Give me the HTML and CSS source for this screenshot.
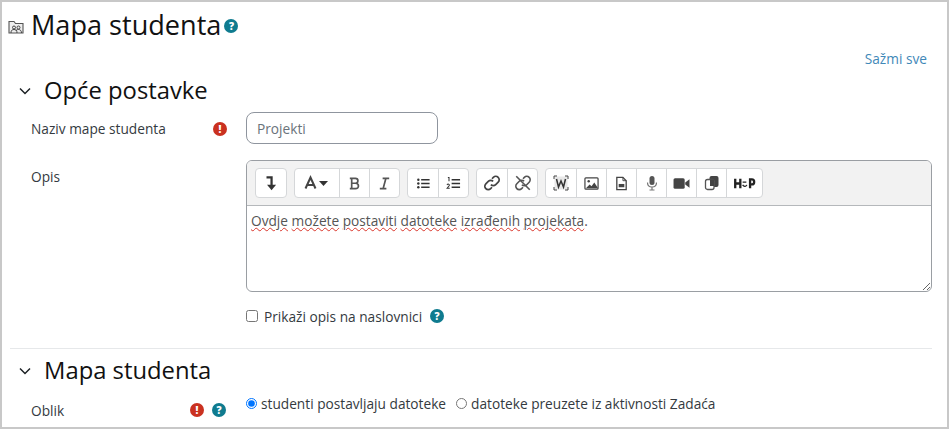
FILE: index.html
```html
<!DOCTYPE html>
<html>
<head>
    <title>Mapa studenta</title>
    <meta name="viewport" content="width=device-width, initial-scale=1.0">
    <link rel="stylesheet" href="styles.css">
</head>
<body>
    <div class="frame">
        <div class="page-title">
            <svg class="title-icon" viewBox="0 0 16 16" width="16" height="16">
                <path d="M1 14V2.500h5l1.500 2H15V14z" fill="#eee" stroke="#555" stroke-width="1.100"/>
                <circle cx="6" cy="8.500" r="1.500" fill="none" stroke="#444"/>
                <circle cx="10.500" cy="8.500" r="1.500" fill="none" stroke="#444"/>
                <path d="M3 14c0-2.500 1-3.500 3-3.500s3 1 3 3.500M8 12c0-1 1-1.500 2.500-1.500s3 1 3 3.500" fill="none" stroke="#444"/>
            </svg>
            <h1>Mapa studenta</h1>
            <span class="badge badge-help badge-title">?</span>
        </div>

        <div class="collapse-row"><a href="#">Sažmi sve</a></div>

        <div class="section-head">
            <svg class="chevron" viewBox="0 0 12 8" width="12" height="8"><path d="M1 1.500l5 5 5-5" fill="none" stroke="#1d2125" stroke-width="1.500"/></svg>
            <h2>Opće postavke</h2>
        </div>

        <div class="form-row row-name">
            <div class="form-label">
                <label for="name">Naziv mape studenta</label>
                <span class="badge badge-req">!</span>
            </div>
            <input class="text-input" id="name" type="text" value="Projekti">
        </div>

        <div class="form-row row-editor">
            <div class="form-label"><label>Opis</label></div>
            <div class="editor">
                <div class="toolbar">
                    <div class="tool-group">
                        <button class="tool"><svg viewBox="0 0 16 16" width="18" height="18"><path d="M4 3h4.500v7" fill="none" stroke="#333" stroke-width="2"/><path d="M4.500 9.500h8L8.500 14.500z" fill="#333"/></svg></button>
                    </div>
                    <div class="tool-group">
                        <button class="tool tool-wide"><svg viewBox="0 0 26 16" width="26" height="16"><path d="M1.500 13.500L6.500 2.500l5 11M3.500 10h6" fill="none" stroke="#444" stroke-width="2"/><path d="M15 6h9l-4.500 5z" fill="#333"/></svg></button>
                        <button class="tool"><svg viewBox="0 0 16 16" width="15" height="15"><path d="M3 2.500h6c3.500 0 3.500 5 0 5.200 4.300 0 4.300 5.800 0 5.800H3M5 2.500v11M5 7.700h4" fill="none" stroke="#555" stroke-width="1.800"/></svg></button>
                        <button class="tool"><svg viewBox="0 0 16 16" width="15" height="15"><path d="M6 2.500h7M3 13.500h7M9.500 2.500l-3 11" fill="none" stroke="#555" stroke-width="1.800"/></svg></button>
                    </div>
                    <div class="tool-group">
                        <button class="tool"><svg viewBox="0 0 16 16" width="15" height="15"><path d="M5.500 4h9M5.500 8h9M5.500 12h9" stroke="#333" stroke-width="1.500"/><circle cx="2.500" cy="4" r="1.300" fill="#333"/><circle cx="2.500" cy="8" r="1.300" fill="#333"/><circle cx="2.500" cy="12" r="1.300" fill="#333"/></svg></button>
                        <button class="tool"><svg viewBox="0 0 16 16" width="15" height="15"><path d="M6 4h9M6 8h9M6 12h9" stroke="#333" stroke-width="1.500"/><path d="M2 1.500h1.200v4M1 9.500c1-1.500 3-.8 2.500.6L1.200 13h2.800" fill="none" stroke="#333" stroke-width="1.100"/></svg></button>
                    </div>
                    <div class="tool-group">
                        <button class="tool"><svg viewBox="0 0 16 16" width="18" height="18"><g fill="none" stroke="#444" stroke-width="1.500"><path d="M7 9.500a3 3 0 0 0 4.300 0l2.200-2.200a3 3 0 0 0-4.300-4.300L8 4.200"/><path d="M9 6.500a3 3 0 0 0-4.300 0L2.500 8.700a3 3 0 0 0 4.300 4.300L8 11.800"/></g></svg></button>
                        <button class="tool"><svg viewBox="0 0 16 16" width="18" height="18"><g fill="none" stroke="#555" stroke-width="1.400"><path d="M7 9.500a3 3 0 0 0 4.300 0l2.200-2.200a3 3 0 0 0-4.300-4.300L8 4.200"/><path d="M9 6.500a3 3 0 0 0-4.300 0L2.500 8.700a3 3 0 0 0 4.300 4.300L8 11.800"/><path d="M2 2l12 12"/></g></svg></button>
                    </div>
                    <div class="tool-group">
                        <button class="tool"><svg viewBox="0 0 16 16" width="16" height="16"><path d="M1.500 1.500h13v13h-13z" fill="#e8e8e8"/><path d="M1 4V1h3M12 1h3v3M15 12v3h-3M4 15H1v-3" fill="none" stroke="#444"/><path d="M3.500 4l2 8 2.500-6 2.500 6 2-8" fill="none" stroke="#333" stroke-width="1.500"/></svg></button>
                        <button class="tool"><svg viewBox="0 0 16 16" width="15" height="15"><rect x="1" y="2" width="14" height="12" rx="1" fill="#fff" stroke="#444" stroke-width="1.300"/><circle cx="5" cy="5.500" r="1.300" fill="#444"/><path d="M2 13l4-4 2 2 3-4 4 6z" fill="#444"/></svg></button>
                        <button class="tool"><svg viewBox="0 0 16 16" width="15" height="15"><path d="M3 1.500h6.500l3.500 3.500v9.500H3z" fill="#fff" stroke="#444" stroke-width="1.400"/><path d="M9.500 1.500V5H13" fill="none" stroke="#444"/><rect x="5" y="8.500" width="6" height="3.500" fill="#444"/></svg></button>
                        <button class="tool"><svg viewBox="0 0 16 16" width="16" height="16"><rect x="5.500" y="1" width="5" height="9" rx="2.500" fill="#555"/><path d="M3.500 7.500c0 6 9 6 9 0M8 12.500v2.500M5.500 15h5" fill="none" stroke="#777" stroke-width="1.200"/></svg></button>
                        <button class="tool"><svg viewBox="0 0 16 16" width="17" height="17"><rect x="0.500" y="3" width="10.500" height="10" rx="1.500" fill="#444"/><path d="M11.500 7l4-3v8l-4-3z" fill="#444"/></svg></button>
                        <button class="tool"><svg viewBox="0 0 16 16" width="16" height="16"><rect x="5.500" y="1" width="9" height="11" rx="2" fill="#444"/><rect x="1.500" y="4.500" width="8.500" height="10" rx="2" fill="#fff" stroke="#555" stroke-width="1.300"/><path d="M6 4.500h4V11H6z" fill="#444"/></svg></button>
                        <button class="tool tool-h5p"><svg viewBox="0 0 24 14" width="23" height="13"><path d="M2 2v10M7.500 2v10M2 7h5.500M18 12V2.500h2c3.200 0 3.200 5.500 0 5.500h-2" fill="none" stroke="#222" stroke-width="2.500"/><path d="M10 5.500h4M10 8.500c1.500 2.500 4 1.500 4.500 0" fill="none" stroke="#222" stroke-width="1.400"/></svg></button>
                    </div>
                </div>
                <div class="editor-body"><span class="typo">Ovdje</span> <span class="typo">možete</span> <span class="typo">postaviti</span> <span class="typo">datoteke</span> <span class="typo">izrađenih</span> <span class="typo">projekata</span>.</div>
            </div>
        </div>

        <div class="form-row row-check">
            <div class="form-label"></div>
            <div class="check-line">
                <input id="showdesc" type="checkbox">
                <label for="showdesc">Prikaži opis na naslovnici</label>
                <span class="badge badge-help">?</span>
            </div>
        </div>

        <hr class="divider">

        <div class="section-head section-second">
            <svg class="chevron" viewBox="0 0 12 8" width="12" height="8"><path d="M1 1.500l5 5 5-5" fill="none" stroke="#1d2125" stroke-width="1.500"/></svg>
            <h2>Mapa studenta</h2>
        </div>

        <div class="form-row row-radio">
            <div class="form-label">
                <label>Oblik</label>
                <span class="badge badge-req">!</span>
                <span class="badge badge-help">?</span>
            </div>
            <div class="radio-line">
                <input id="opt1" type="radio" name="oblik" checked>
                <label for="opt1">studenti postavljaju datoteke</label>
                <input id="opt2" type="radio" name="oblik">
                <label for="opt2">datoteke preuzete iz aktivnosti Zadaća</label>
            </div>
        </div>
    </div>
</body>
</html>
```

FILE: styles.css
```css
html, body {
    margin: 0;
    height: 100%;
    overflow: hidden;
}
body {
    font-family: "Open Sans", sans-serif;
    font-size: 13.700px;
    color: #1d2125;
    background: #fff;
}
.frame {
    box-sizing: border-box;
    width: 949px;
    height: 429px;
    border: 2px solid #c8c8c8;
    padding: 0 15px 0 8px;
    overflow: hidden;
}
.page-title {
    display: flex;
    align-items: center;
    height: 44px;
    box-sizing: border-box;
}
.title-icon {
    margin-left: -2px;
    margin-right: 7px;
    margin-top: 5px;
}
h1 {
    margin: 0;
    font-size: 27.100px;
    font-weight: 400;
    color: #111;
}
.badge {
    display: inline-flex;
    align-items: center;
    justify-content: center;
    width: 14px;
    height: 14px;
    border-radius: 50%;
    color: #fff;
    font-size: 10px;
    font-weight: 800;
    line-height: 1;
    flex: none;
}
.badge-help {
    background: #0f7b8f;
}
.badge-req {
    background: #ca3120;
}
.badge-title {
    margin-top: 3px;
    margin-left: 3px;
}
.collapse-row {
    text-align: right;
    height: 25px;
    line-height: 25px;
    padding-right: 5px;
}
.collapse-row a {
    color: #3f88b8;
    text-decoration: none;
}
.section-head {
    display: flex;
    align-items: center;
    height: 37px;
}
.section-head h2 {
    margin: 0;
    font-size: 23.800px;
    font-weight: 400;
    color: #111;
}
.chevron {
    margin-left: 9px;
    margin-right: 13px;
    margin-top: 2px;
}
.form-row {
    display: flex;
}
.form-label {
    box-sizing: border-box;
    width: 236px;
    flex: none;
    display: flex;
    align-items: center;
    gap: 8px;
    padding-left: 21px;
    padding-right: 19px;
    color: #343a40;
}
.form-label label {
    margin-right: auto;
}
.row-name {
    height: 33px;
    margin-top: 4px;
}
.text-input {
    box-sizing: border-box;
    width: 192px;
    height: 32px;
    border: 1px solid #8f959e;
    border-radius: 8px;
    padding: 0 10px;
    font: inherit;
    color: #6a737b;
}
.row-editor {
    margin-top: 15px;
}
.row-editor .form-label {
    align-items: flex-start;
    padding-top: 7px;
}
.editor {
    box-sizing: border-box;
    width: 686px;
    border: 1px solid #9a9ea3;
    border-radius: 6px;
    overflow: hidden;
}
.toolbar {
    display: flex;
    gap: 7px;
    align-items: center;
    box-sizing: border-box;
    height: 45px;
    padding: 7px 8px;
    background: #f2f2f2;
    border-bottom: 1px solid #b5b8bb;
}
.tool-group {
    display: flex;
    height: 30px;
    box-sizing: border-box;
    background: #fff;
    border: 1px solid #d5d7d9;
    border-radius: 4px;
}
.tool {
    display: flex;
    align-items: center;
    justify-content: center;
    width: 30px;
    padding: 0;
    background: none;
    border: none;
    border-left: 1px solid #d5d7d9;
}
.tool:first-child {
    border-left: none;
}
.tool-wide {
    width: 44px;
}
.tool-h5p {
    width: 36px;
}
.editor-body {
    box-sizing: border-box;
    height: 85px;
    padding: 5px 4px;
    color: #555;
    resize: vertical;
    overflow: auto;
}
.typo {
    text-decoration: underline wavy #d9362b 1px;
    text-underline-offset: 1px;
}
.row-check {
    margin-top: 14px;
    height: 20px;
}
.check-line, .radio-line {
    display: flex;
    align-items: center;
    color: #343a40;
}
.check-line input {
    margin: 0 6px 0 0;
    width: 12px;
    height: 12px;
}
.check-line .badge {
    margin-left: 8px;
}
.divider {
    margin: 22px 0 0 0;
    border: none;
    border-top: 1px solid #e6e8ea;
}
.section-second {
    height: 42px;
}
.row-radio {
    height: 20px;
    margin-top: 9px;
}
.row-radio .form-label {
    padding-right: 20px;
}
.radio-line {
    height: 20px;
    margin-top: -7px;
}
.radio-line input {
    margin: 0 4px 0 0;
    width: 11px;
    height: 11px;
}
.radio-line label {
    margin-right: 10px;
}
```
